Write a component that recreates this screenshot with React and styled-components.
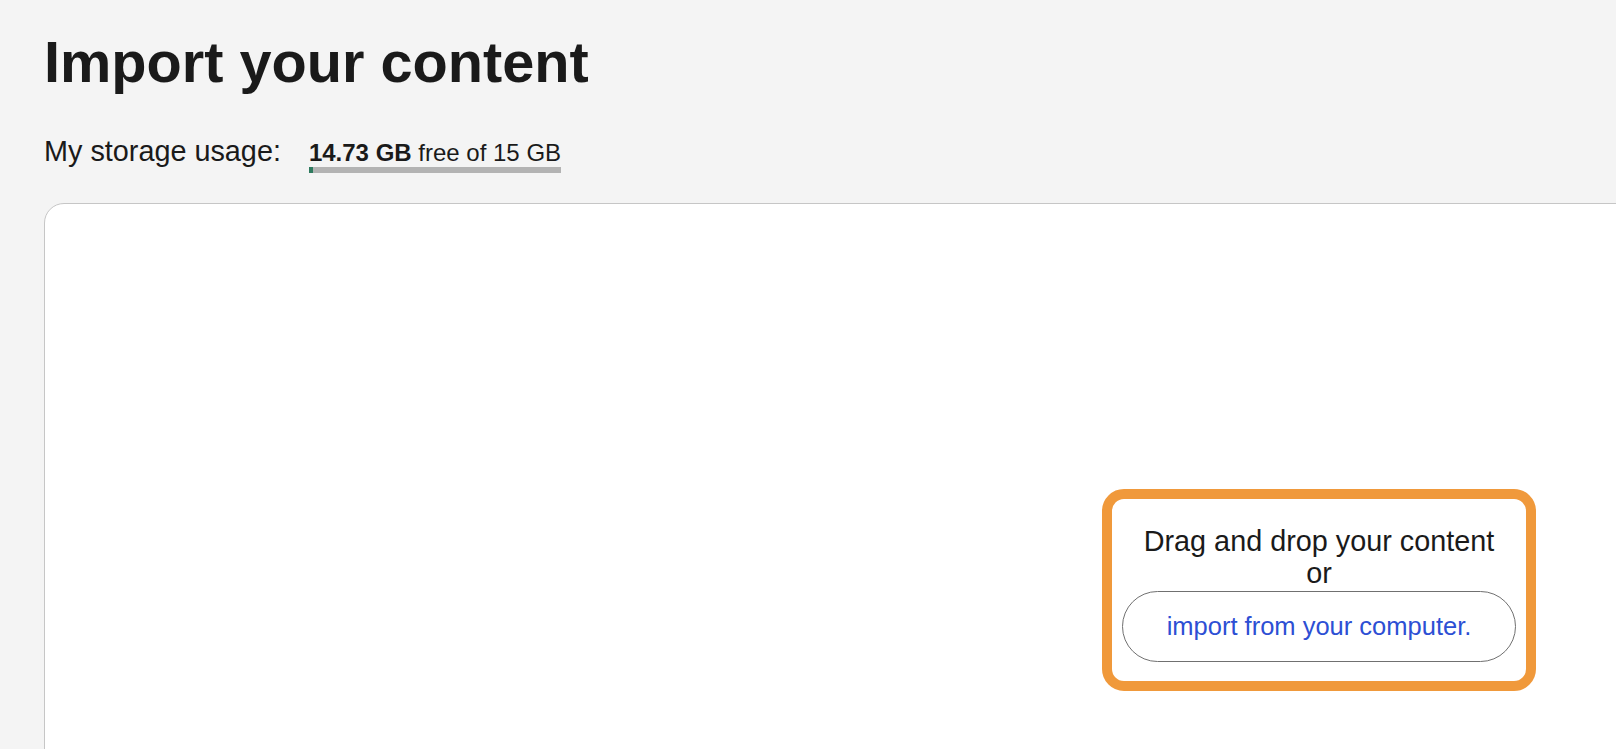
import React from "react";
import styled, { createGlobalStyle } from "styled-components";

const GlobalStyle = createGlobalStyle`
  html, body {
    margin: 0;
    padding: 0;
    background: #f4f4f4;
    overflow: hidden;
  }
  body {
    font-family: "Liberation Sans", Arial, Helvetica, sans-serif;
    color: #1a1a1a;
  }
`;

const Page = styled.main`
  padding: 29px 0 0 44px;
  width: 1616px;
  height: 749px;
  box-sizing: border-box;
  overflow: hidden;
`;

const Title = styled.h1`
  margin: 0;
  font-size: 57.7px;
  font-weight: 700;
  line-height: normal;
  color: #1a1a1a;
`;

const StorageRow = styled.div`
  display: flex;
  align-items: baseline;
  gap: 28px;
  margin-top: 40px;
`;

const StorageLabel = styled.span`
  font-size: 28.8px;
  line-height: normal;
  color: #1a1a1a;
`;

const Meter = styled.div`
  display: inline-flex;
  flex-direction: column;
`;

const MeterText = styled.span`
  font-size: 24px;
  line-height: normal;
  color: #1a1a1a;
  b {
    font-weight: 700;
  }
`;

const Bar = styled.div`
  height: 6px;
  background: #b3b3b3;
  display: flex;
`;

const BarFill = styled.div`
  height: 100%;
  background: #2e7a5e;
`;

const Panel = styled.section`
  margin-top: 30px;
  width: 2550px;
  height: 774px;
  box-sizing: border-box;
  background: #ffffff;
  border: 1px solid #c6c6c6;
  border-radius: 20px;
  display: flex;
  align-items: center;
  justify-content: center;
`;

const DropBox = styled.div`
  width: 434px;
  box-sizing: border-box;
  border: 10px solid #f0993b;
  border-radius: 22px;
  background: #ffffff;
  padding: 26px 10px 19px;
  display: flex;
  flex-direction: column;
  align-items: center;
  text-align: center;
`;

const DropLine = styled.div`
  font-size: 28.8px;
  line-height: 32px;
  color: #1a1a1a;
`;

const ImportButton = styled.button`
  margin-top: 2px;
  width: 100%;
  height: 71px;
  box-sizing: border-box;
  border: 1px solid #707070;
  border-radius: 36px;
  background: #ffffff;
  color: #2d4fd4;
  font-family: "Liberation Sans", Arial, Helvetica, sans-serif;
  font-size: 25.5px;
  cursor: pointer;
  padding: 0;
`;

export default function App() {
  const total = 15;
  const free = 14.73;
  const usedPct = ((total - free) / total) * 100;
  return (
    <>
      <GlobalStyle />
      <Page>
        <Title>Import your content</Title>
        <StorageRow>
          <StorageLabel>My storage usage:</StorageLabel>
          <Meter>
            <MeterText>
              <b>14.73 GB</b> free of 15 GB
            </MeterText>
            <Bar>
              <BarFill style={{ width: `${usedPct}%` }} />
            </Bar>
          </Meter>
        </StorageRow>
        <Panel>
          <DropBox>
            <DropLine>Drag and drop your content</DropLine>
            <DropLine>or</DropLine>
            <ImportButton type="button">import from your computer.</ImportButton>
          </DropBox>
        </Panel>
      </Page>
    </>
  );
}
